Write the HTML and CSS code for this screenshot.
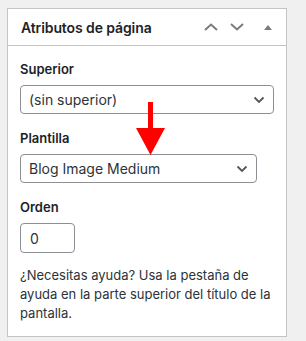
FILE: index.html
```html
<!DOCTYPE html>
<html lang="es">
<head>
    <meta charset="UTF-8">
    <meta name="viewport" content="width=device-width, initial-scale=1.0">
    <title>Atributos de página</title>
    <link rel="stylesheet" href="styles.css">
</head>
<body>
    <div class="postbox">
        <div class="postbox-header">
            <h2>Atributos de página</h2>
            <div class="handle-actions">
                <button class="handle-btn" aria-label="Subir">
                    <svg width="14" height="8" viewBox="0 0 14 8"><path d="M1 7 L7 1.5 L13 7" fill="none" stroke="#787c82" stroke-width="2"/></svg>
                </button>
                <button class="handle-btn" aria-label="Bajar">
                    <svg width="14" height="8" viewBox="0 0 14 8"><path d="M1 1 L7 6.5 L13 1" fill="none" stroke="#787c82" stroke-width="2"/></svg>
                </button>
                <button class="handle-btn toggle" aria-label="Cerrar">
                    <svg width="8" height="5" viewBox="0 0 8 5"><path d="M0 5 L4 0 L8 5 Z" fill="#787c82"/></svg>
                </button>
            </div>
        </div>
        <div class="inside">
            <p class="field-label label-first">Superior</p>
            <div class="select wide">
                <span>(sin superior)</span>
                <svg width="12" height="8" viewBox="0 0 12 8"><path d="M1.5 1.5 L6 6 L10.5 1.5" fill="none" stroke="#50575e" stroke-width="1.8"/></svg>
            </div>
            <p class="field-label">Plantilla</p>
            <div class="select">
                <span>Blog Image Medium</span>
                <svg width="12" height="8" viewBox="0 0 12 8"><path d="M1.5 1.5 L6 6 L10.5 1.5" fill="none" stroke="#50575e" stroke-width="1.8"/></svg>
            </div>
            <p class="field-label">Orden</p>
            <div class="number-input">0</div>
            <p class="help">¿Necesitas ayuda? Usa la pestaña de ayuda en la parte superior del título de la pantalla.</p>
        </div>
    </div>

    <!-- annotation arrow over the form -->
    <svg class="red-arrow" width="30" height="54" viewBox="0 0 30 54">
        <rect x="12" y="0" width="5" height="27" fill="#ff0000"/>
        <path d="M0 26 L29 26 L14.5 53 Z" fill="#ff0000"/>
    </svg>
</body>
</html>
```

FILE: styles.css
```css
body {
    margin: 0;
    background: #f0f0f1;
    font-family: Inter, "Noto Sans", sans-serif;
    color: #1d2327;
    position: relative;
    height: 341px;
    overflow: hidden;
}

.postbox {
    margin: 8px 0 0 7px;
    width: 280px;
    box-sizing: border-box;
    background: #fff;
    border: 1px solid #c3c4c7;
}

.postbox-header {
    display: flex;
    align-items: center;
    justify-content: space-between;
    height: 36px;
    border-bottom: 1px solid #c3c4c7;
}

.postbox-header h2 {
    margin: 0;
    padding-left: 13px;
    font-size: 14px;
    font-weight: 600;
    letter-spacing: -0.1px;
}

.handle-actions {
    display: flex;
}

.handle-btn {
    width: 26px;
    height: 36px;
    padding: 0;
    border: none;
    background: none;
    display: flex;
    align-items: center;
    justify-content: center;
}

.handle-btn.toggle {
    width: 36px;
}

.inside {
    padding: 0 12px 13px;
}

.field-label {
    margin: 15px 0 7px;
    font-size: 13px;
    font-weight: 600;
    line-height: 18px;
    color: #1d2327;
}

.label-first {
    margin-top: 14px;
}

.select {
    width: 237px;
    height: 29px;
    box-sizing: border-box;
    border: 1px solid #8c8f94;
    border-radius: 4px;
    display: flex;
    align-items: center;
    justify-content: space-between;
    padding: 0 8px 0 8px;
    font-size: 14px;
    color: #2c3338;
}

.select.wide {
    width: 254px;
}

.number-input {
    width: 55px;
    height: 30px;
    box-sizing: border-box;
    border: 1px solid #8c8f94;
    border-radius: 4px;
    padding: 0 9px;
    display: flex;
    align-items: center;
    font-size: 14px;
    color: #2c3338;
}

.help {
    margin: 13px 0 0;
    font-size: 13px;
    line-height: 19px;
    color: #2c3338;
}

.red-arrow {
    position: absolute;
    left: 136px;
    top: 102px;
}
```
